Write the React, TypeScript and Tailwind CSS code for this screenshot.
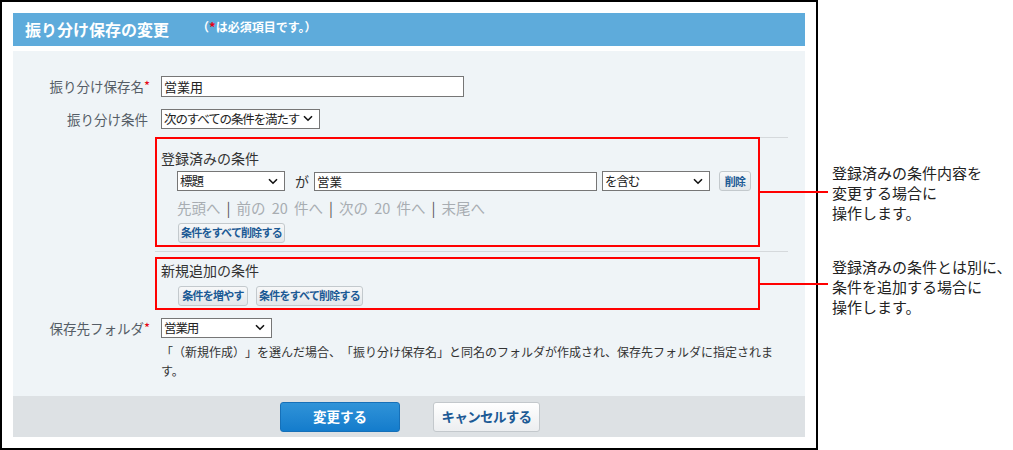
import React from "react";

const font = { fontFamily: '"Noto Sans CJK JP", "Noto Sans", sans-serif' };

function Chevron() {
  return (
    <svg width="10" height="7" viewBox="0 0 10 7" className="shrink-0">
      <path d="M1 1.2 L5 5.2 L9 1.2" fill="none" stroke="#111" strokeWidth="1.6" />
    </svg>
  );
}

function Select({ value, w }: { value: string; w: string }) {
  return (
    <div
      className={`${w} h-[20px] border border-[#767676] bg-white flex items-center justify-between pl-[2px] pr-[6px] text-[12.5px] text-[#222] leading-none whitespace-nowrap`}
    >
      <span className="tracking-[-0.09em]">{value}</span>
      <Chevron />
    </div>
  );
}

function SmallBtn({ children, w }: { children: React.ReactNode; w: string }) {
  return (
    <button
      className={`${w} h-[20px] rounded-[3px] border border-[#c3c9cd] bg-gradient-to-b from-[#f7f8f9] to-[#e3e7ea] text-[11px] font-bold text-[#1c5a95] leading-none whitespace-nowrap tracking-[-0.07em] flex items-center justify-center`}
    >
      {children}
    </button>
  );
}

function Req() {
  return <span className="text-[#e60012] text-[13px] align-top">*</span>;
}

const sep = <span className="text-[#555] mx-[6px]">|</span>;

export default function App() {
  return (
    <div className="w-[1013px] h-[450px] bg-white flex relative overflow-hidden" style={font}>
      <div className="w-[818px] h-[450px] border-2 border-black p-[11px] flex flex-col shrink-0">
        {/* header */}
        <div className="h-[33px] bg-[#5eabdb] flex items-center pl-[12px]">
          <span className="text-white font-bold text-[16px] leading-none">振り分け保存の変更</span>
          <span className="ml-[28px] -mt-[6px] text-white font-bold text-[12px] leading-none">
            （<span className="text-[#e60012] text-[13px]">*</span>は必須項目です。）
          </span>
        </div>

        {/* panel */}
        <div className="mt-[5px] h-[347px] bg-[#eff4f7] flex flex-col pt-[25px]">
          <div className="flex items-center h-[21px]">
            <div className="w-[137px] text-right text-[13.5px] text-[#555d66]">
              振り分け保存名<Req />
            </div>
            <div className="ml-[11px] w-[303px] h-[21px] border border-[#767676] bg-white text-[13px] text-[#222] pl-[2px] leading-[19px]">
              営業用
            </div>
          </div>

          <div className="flex items-center h-[20px] mt-[12px]">
            <div className="w-[137px] text-right text-[13.5px] text-[#555d66] pr-[2px]">振り分け条件</div>
            <div className="ml-[11px]">
              <Select value="次のすべての条件を満たす" w="w-[159px]" />
            </div>
          </div>

          {/* conditions area */}
          <div className="ml-[142px] w-[633px] mt-[8px] flex flex-col">
            <div className="h-px bg-[#d5d9dc]" />
            <div className="-mt-px w-[605px] h-[110px] border-2 border-[#ff0000] pl-[4px] pt-[10px]">
              <div className="text-[14px] text-[#333] leading-[18px]">登録済みの条件</div>
              <div className="flex items-center mt-[4px] pl-[16px]">
                <Select value="標題" w="w-[108px]" />
                <span className="ml-[10px] text-[14px] text-[#333]">が</span>
                <div className="ml-[5px] w-[283px] h-[19px] border border-[#767676] bg-white text-[12.5px] text-[#222] pl-[2px] leading-[17px]">
                  営業
                </div>
                <div className="ml-[5px]">
                  <Select value="を含む" w="w-[108px]" />
                </div>
                <div className="ml-[9px]">
                  <SmallBtn w="w-[32px]">削除</SmallBtn>
                </div>
              </div>
              <div className="mt-[6px] pl-[16px] text-[14.5px] leading-[20px] text-[#a8adb2] whitespace-nowrap [word-spacing:3px]">
                先頭へ{sep}前の 20 件へ{sep}次の 20 件へ{sep}末尾へ
              </div>
              <div className="mt-[5px] pl-[17px]">
                <SmallBtn w="w-[107px]">条件をすべて削除する</SmallBtn>
              </div>
            </div>
            <div className="h-px bg-[#d5d9dc] mt-[4px]" />
            <div className="mt-[5px] w-[605px] h-[53px] border-2 border-[#ff0000] pl-[4px] pt-[2px]">
              <div className="text-[14px] text-[#333] leading-[18px]">新規追加の条件</div>
              <div className="flex items-center gap-[8px] mt-[7px] pl-[17px]">
                <SmallBtn w="w-[70px]">条件を増やす</SmallBtn>
                <SmallBtn w="w-[107px]">条件をすべて削除する</SmallBtn>
              </div>
            </div>
          </div>

          <div className="flex items-center h-[20px] mt-[8px]">
            <div className="w-[137px] text-right text-[13.5px] text-[#555d66]">
              保存先フォルダ<Req />
            </div>
            <div className="ml-[11px]">
              <Select value="営業用" w="w-[111px]" />
            </div>
          </div>
          <div className="ml-[148px] w-[620px] mt-[4px] text-[12px] leading-[19px] text-[#333] [text-spacing-trim:space-all]">
            「（新規作成）」を選んだ場合、「振り分け保存名」と同名のフォルダが作成され、保存先フォルダに指定されます。
          </div>
        </div>

        {/* footer */}
        <div className="h-[41px] bg-[#dde1e4] flex items-center justify-center gap-[33px] pl-[2px]">
          <button className="w-[120px] h-[30px] rounded-[3px] border border-[#1670b8] bg-gradient-to-b from-[#2f93d8] to-[#137ccc] text-white font-bold text-[13.5px] leading-none">
            変更する
          </button>
          <button className="w-[107px] h-[30px] rounded-[3px] border border-[#c3c8cc] bg-gradient-to-b from-white to-[#eceef0] text-[#1c5a95] font-bold text-[13.5px] leading-none tracking-[-0.05em]">
            キャンセルする
          </button>
        </div>
      </div>

      {/* callouts */}
      <div className="absolute left-[760px] top-[191px] w-[68px] h-[2px] bg-[#ff0000]" />
      <div className="absolute left-[760px] top-[283px] w-[68px] h-[2px] bg-[#ff0000]" />
      <div className="ml-[14px] pt-[163px] text-[15px] leading-[20px] text-[#222] whitespace-nowrap">
        <div>
          登録済みの条件内容を
          <br />
          変更する場合に
          <br />
          操作します。
        </div>
        <div className="mt-[34px]">
          登録済みの条件とは別に、
          <br />
          条件を追加する場合に
          <br />
          操作します。
        </div>
      </div>
    </div>
  );
}
